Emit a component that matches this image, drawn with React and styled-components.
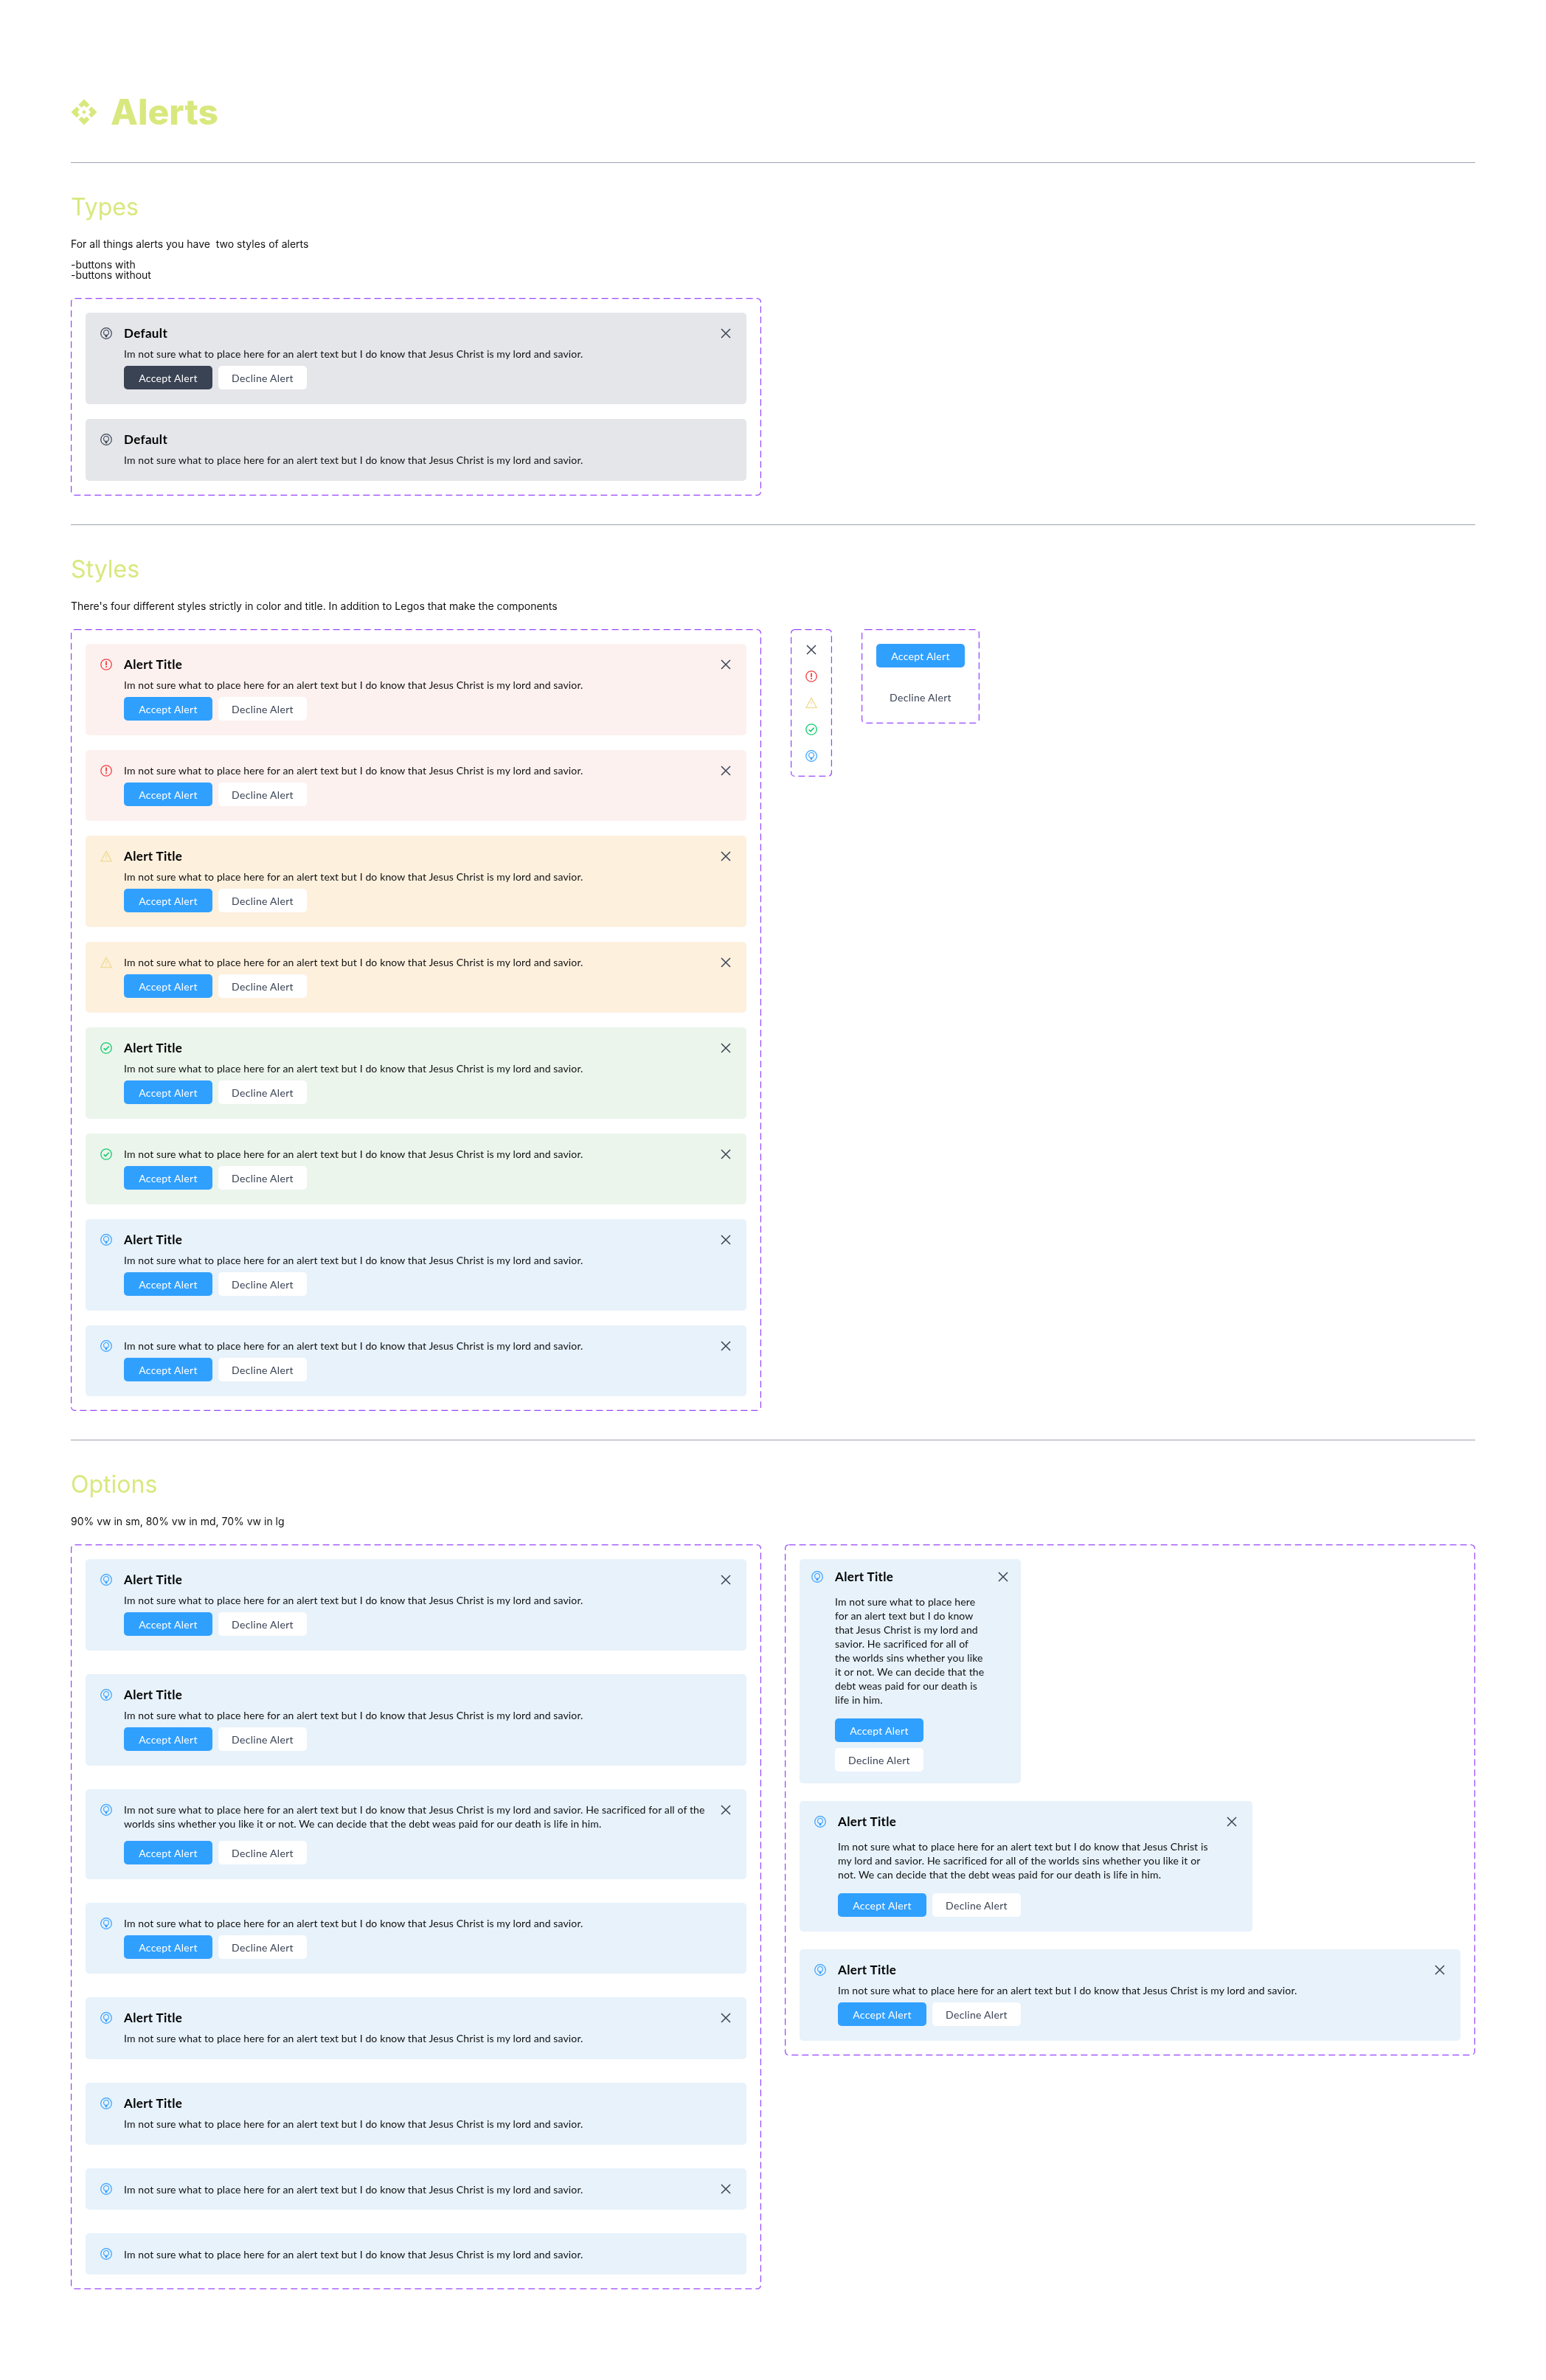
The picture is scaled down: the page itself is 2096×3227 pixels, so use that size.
import React from "react";
import styled, { createGlobalStyle } from "styled-components";

const Global = createGlobalStyle`
  html, body { margin: 0; padding: 0; background: #fff; }
  * { box-sizing: border-box; }
`;

const tones = {
  neutral: { bg: "#e5e6ea", icon: "#3a4354", kind: "info" },
  error: { bg: "#fcf1ef", icon: "#f73b3b", kind: "error" },
  warning: { bg: "#fdf0dd", icon: "#f0da92", kind: "warning" },
  success: { bg: "#ebf5ec", icon: "#10cb6b", kind: "success" },
  info: { bg: "#e7f2fb", icon: "#36a0ff", kind: "info" },
};

const Page = styled.main`
  width: 2096px;
  padding: 134px 96px 124px;
  font-family: Inter, "Liberation Sans", sans-serif;
  color: #111;
  will-change: transform;
`;
const PageTitle = styled.h1`
  display: flex;
  align-items: center;
  gap: 18px;
  height: 36px;
  margin: 0 0 50px;
  font-size: 48px;
  line-height: 36px;
  font-weight: 800;
  color: #d9e87e;
`;
const Rule = styled.hr`
  height: 1px;
  margin: 0;
  border: 0;
  background: #9ca3af;
`;
const Section = styled.section`
  padding: 39px 0;
`;
const SectionTitle = styled.h2`
  margin: 1px 0 0;
  font-size: 32px;
  line-height: 40px;
  font-weight: 400;
  color: #d9e87e;
`;
const Lead = styled.p`
  margin: 23px 0 24px;
  font-size: 14px;
  line-height: 14px;
  white-space: pre-wrap;
`;
const Row = styled.div`
  display: flex;
  align-items: flex-start;
  gap: ${(p) => p.$gap}px;
`;
const BoxFrame = styled.div`
  position: relative;
  flex: ${(p) => (p.$width ? `0 0 ${p.$width}px` : "1 1 0")};
  width: ${(p) => (p.$width ? `${p.$width}px` : "auto")};
  display: flex;
  flex-direction: column;
  gap: ${(p) => p.$gap || 20}px;
  padding: 20px;
`;
const DashSvg = styled.svg`
  position: absolute;
  inset: 0;
  width: 100%;
  height: 100%;
  pointer-events: none;
  overflow: visible;
`;
const DashRect = styled.rect`
  fill: none;
  stroke: #9747ff;
  stroke-width: 1.25;
  stroke-dasharray: 9 5;
`;
const Card = styled.div`
  display: flex;
  gap: 16px;
  width: ${(p) => (p.$width ? `${p.$width}px` : "100%")};
  padding: ${(p) => p.$pad || 20}px;
  border-radius: 5px;
  background: ${(p) => tones[p.$tone].bg};
`;
const Glyph = styled.svg`
  flex: none;
  display: block;
  width: 16px;
  height: 16px;
  color: ${(p) => p.$color};
`;
const Body = styled.div`
  flex: 1 1 0;
  min-width: 0;
  font-family: Lato, "Open Sans", sans-serif;
`;
const CardTitle = styled.div`
  height: 16px;
  font-size: 17px;
  line-height: 16px;
  font-weight: 700;
  letter-spacing: 0.35px;
  color: #000;
`;
const Copy = styled.p`
  margin: ${(p) => p.$top}px 0 ${(p) => p.$bottom}px;
  font-size: 14px;
  line-height: 19px;
  letter-spacing: 0.13px;
  color: #111;
`;
const Actions = styled.div`
  display: flex;
  flex-direction: ${(p) => (p.$stack ? "column" : "row")};
  gap: 8px;
  margin-top: ${(p) => p.$top}px;
`;
const Btn = styled.button`
  width: 120px;
  height: 32px;
  padding: 0;
  border: 0;
  border-radius: 5px;
  font-family: Lato, "Open Sans", sans-serif;
  font-size: 14px;
  letter-spacing: 0.3px;
  background: ${(p) => (p.$variant === "accept" ? "#30a0ff" : p.$variant === "dark" ? "#3a4354" : "#fff")};
  color: ${(p) => (p.$variant === "decline" ? "#3a4354" : "#fff")};
`;

function Icon({ kind, color }) {
  return (
    <Glyph $color={color} viewBox="0 0 16 16" fill="none" stroke="currentColor">
      {kind === "close" && <path d="M2 2 14 14M14 2 2 14" strokeWidth="1.5" />}
      {kind === "error" && (
        <>
          <circle cx="8" cy="8" r="7.2" strokeWidth="1.3" />
          <rect x="7.1" y="3.6" width="1.8" height="5.4" fill="currentColor" stroke="none" />
          <rect x="7.1" y="10.2" width="1.8" height="1.9" fill="currentColor" stroke="none" />
        </>
      )}
      {kind === "warning" && (
        <>
          <path d="M8 1.4 15.2 14.6H.8Z" strokeWidth="1.3" />
          <rect x="7.4" y="6" width="1.2" height="3.8" fill="currentColor" stroke="none" />
          <rect x="7.4" y="11" width="1.2" height="1.3" fill="currentColor" stroke="none" />
        </>
      )}
      {kind === "success" && (
        <>
          <circle cx="8" cy="8" r="7.2" strokeWidth="1.3" />
          <path d="M4.7 8.3 7.1 10.6 11.6 5.8" strokeWidth="1.6" />
        </>
      )}
      {kind === "info" && (
        <>
          <circle cx="8" cy="8" r="7.3" strokeWidth="1.2" />
          <circle cx="8" cy="6.9" r="3.4" strokeWidth="1.1" />
          <path d="M6.2 10.2h3.6L9 13.2H7Z" fill="currentColor" stroke="none" />
        </>
      )}
    </Glyph>
  );
}

function Logo() {
  const chevron = "M18 0.5 25.5 8 21.5 12 18 9 14.5 12 10.5 8Z";
  return (
    <svg width="36" height="36" viewBox="0 0 36 36" fill="#d9e87e">
      {[0, 90, 180, 270].map((a) => (
        <path key={a} d={chevron} transform={`rotate(${a} 18 18)`} />
      ))}
      <path d="M18 15 21 18 18 21 15 18Z" />
    </svg>
  );
}

function DashBox({ children, ...rest }) {
  const ref = React.useRef(null);
  const [size, setSize] = React.useState({ w: 0, h: 0 });
  React.useLayoutEffect(() => {
    const el = ref.current;
    setSize({ w: el.offsetWidth, h: el.offsetHeight });
  }, []);
  return (
    <BoxFrame ref={ref} {...rest}>
      <DashSvg aria-hidden="true">
        <DashRect x="0.6" y="0.6" width={Math.max(size.w - 1.2, 0)} height={Math.max(size.h - 1.2, 0)} rx="5" />
      </DashSvg>
      {children}
    </BoxFrame>
  );
}

const SHORT = "Im not sure what to place here for an alert text but I do know that Jesus Christ is my lord and savior.";
const LONG = SHORT + " He sacrificed for all of the worlds sins whether you like it or not. We can decide that the debt weas paid for our death is life in him.";

function Alert({
  tone = "info",
  title,
  text = SHORT,
  buttons = true,
  close = true,
  dark = false,
  width,
  pad,
  copyTop,
  actionsTop = 7,
  stack = false,
}) {
  const t = tones[tone];
  const top = copyTop ?? (title ? 10 : buttons ? -2 : -1);
  const bottom = buttons ? 0 : title ? -1 : -2;
  return (
    <Card $tone={tone} $width={width} $pad={pad}>
      <Icon kind={t.kind} color={t.icon} />
      <Body>
        {title && <CardTitle>{title}</CardTitle>}
        <Copy $top={top} $bottom={bottom}>{text}</Copy>
        {buttons && (
          <Actions $top={actionsTop} $stack={stack}>
            <Btn $variant={dark ? "dark" : "accept"}>Accept Alert</Btn>
            <Btn $variant="decline">Decline Alert</Btn>
          </Actions>
        )}
      </Body>
      {close && <Icon kind="close" color="#3a4354" />}
    </Card>
  );
}

const styleTones = ["error", "warning", "success", "info"];

export default function App() {
  return (
    <Page>
      <Global />
      <PageTitle>
        <Logo />
        Alerts
      </PageTitle>
      <Rule />

      <Section>
        <SectionTitle>Types</SectionTitle>
        <Lead>{"For all things alerts you have  two styles of alerts\n\n-buttons with\n-buttons without"}</Lead>
        <Row $gap={40}>
          <DashBox $width={936}>
            <Alert tone="neutral" title="Default" dark />
            <Alert tone="neutral" title="Default" buttons={false} close={false} />
          </DashBox>
        </Row>
      </Section>
      <Rule />

      <Section>
        <SectionTitle>Styles</SectionTitle>
        <Lead>There's four different styles strictly in color and title. In addition to Legos that make the components</Lead>
        <Row $gap={40}>
          <DashBox $width={936}>
            {styleTones.map((tone) => (
              <React.Fragment key={tone}>
                <Alert tone={tone} title="Alert Title" />
                <Alert tone={tone} />
              </React.Fragment>
            ))}
          </DashBox>
          <DashBox $width={56}>
            <Icon kind="close" color="#3a4354" />
            <Icon kind="error" color={tones.error.icon} />
            <Icon kind="warning" color={tones.warning.icon} />
            <Icon kind="success" color={tones.success.icon} />
            <Icon kind="info" color={tones.info.icon} />
          </DashBox>
          <DashBox $width={160} $gap={24}>
            <Btn $variant="accept">Accept Alert</Btn>
            <Btn $variant="decline">Decline Alert</Btn>
          </DashBox>
        </Row>
      </Section>
      <Rule />

      <Section>
        <SectionTitle>Options</SectionTitle>
        <Lead>90% vw in sm, 80% vw in md, 70% vw in lg</Lead>
        <Row $gap={32}>
          <DashBox $gap={32}>
            <Alert title="Alert Title" />
            <Alert title="Alert Title" close={false} />
            <Alert text={LONG} actionsTop={14} />
            <Alert close={false} />
            <Alert title="Alert Title" buttons={false} />
            <Alert title="Alert Title" buttons={false} close={false} />
            <Alert buttons={false} />
            <Alert buttons={false} close={false} />
          </DashBox>
          <DashBox $gap={24}>
            <Alert title="Alert Title" text={LONG} width={300} pad={16} copyTop={16} actionsTop={16} stack />
            <Alert title="Alert Title" text={LONG} width={614} copyTop={16} actionsTop={16} />
            <Alert title="Alert Title" />
          </DashBox>
        </Row>
      </Section>
    </Page>
  );
}
